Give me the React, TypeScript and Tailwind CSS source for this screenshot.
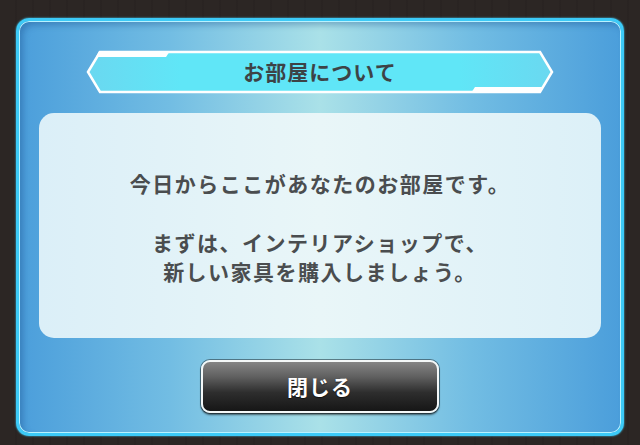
import React from "react";

const jp = { fontFamily: '"Noto Sans CJK JP", "Noto Sans", sans-serif' };

function Banner() {
  // Hexagonal title plate with striped ends
  const stripesL = [13, 16, 19, 22, 25, 28, 31, 34];
  const stripesR = [8, 11, 14, 17, 20, 23, 26];
  return (
    <div className="relative mx-auto flex h-[44px] w-[468px] items-center justify-center" style={jp}>
      <svg className="absolute inset-0" width="468" height="44" viewBox="0 0 468 44">
        <defs>
          <linearGradient id="plate" x1="0" x2="1" y1="0" y2="0">
            <stop offset="0" stopColor="#6ad8f0" />
            <stop offset="0.2" stopColor="#60e6f7" />
            <stop offset="0.8" stopColor="#60e6f7" />
            <stop offset="1" stopColor="#6ad8f0" />
          </linearGradient>
          <linearGradient id="fadeL" x1="0" x2="1" y1="0" y2="0">
            <stop offset="0" stopColor="#ffffff" stopOpacity="0.9" />
            <stop offset="1" stopColor="#ffffff" stopOpacity="0" />
          </linearGradient>
          <linearGradient id="fadeR" x1="1" x2="0" y1="0" y2="0">
            <stop offset="0" stopColor="#ffffff" stopOpacity="0.9" />
            <stop offset="1" stopColor="#ffffff" stopOpacity="0" />
          </linearGradient>
        </defs>
        <polygon
          points="2,22 14,2 454,2 466,22 454,42 14,42"
          fill="url(#plate)"
          stroke="#ffffff"
          strokeWidth="2.5"
          strokeLinejoin="miter"
        />
        {stripesL.map((y) => (
          <line key={"l" + y} x1="12" x2="180" y1={y} y2={y} stroke="url(#fadeL)" strokeWidth="1.2" />
        ))}
        {stripesR.map((y) => (
          <line key={"r" + y} x1="290" x2="458" y1={y} y2={y} stroke="url(#fadeR)" strokeWidth="1.2" />
        ))}
        <polygon points="13,1 84,1 80,7 10,7" fill="#ffffff" />
        <polygon points="389,37 457,37 454,43 385,43" fill="#ffffff" />
      </svg>
      <span className="relative text-[21px] font-bold tracking-[1px] text-[#3d4346]">お部屋について</span>
    </div>
  );
}

export default function App() {
  return (
    <div className="h-[445px] w-[640px] overflow-hidden bg-[repeating-linear-gradient(90deg,#2c2624_0px,#2c2624_15px,#272120_16px,#2c2624_17px)] pl-[16px] pt-[18px]">
      <div className="flex h-[418px] w-[608px] flex-col rounded-[13px] border-[3px] border-[#3ccaf7] bg-[linear-gradient(90deg,#4b9edb_0%,#72bde3_25%,#aae1e8_50%,#72bde3_75%,#4b9edb_100%)] shadow-[inset_0_0_0_1px_#b8f2ff,inset_4px_4px_6px_rgba(20,70,130,0.35),0_0_2px_#49d4ff]">
        <div className="pt-[29px]">
          <Banner />
        </div>
        <div
          className="mx-auto mt-[19px] flex h-[225px] w-[562px] flex-col items-center justify-center rounded-[15px] bg-[linear-gradient(90deg,#dbeff8_0%,#e9f6f8_50%,#dcf0f8_100%)] pt-[4px] text-center text-[21px] font-bold leading-[29.5px] tracking-[1.5px] text-[#4a4d4f]"
          style={jp}
        >
          <p>今日からここがあなたのお部屋です。</p>
          <p>&nbsp;</p>
          <p>まずは、インテリアショップで、</p>
          <p>新しい家具を購入しましょう。</p>
        </div>
        <div className="mt-[22px] flex justify-center">
          <button
            className="flex h-[53px] w-[238px] items-center justify-center rounded-[9px] border-[2px] border-[#f4f8f8] bg-[linear-gradient(180deg,#858585_0%,#606060_30%,#2e2e2e_62%,#161616_100%)] text-[21px] font-bold tracking-[1px] text-white shadow-[0_2px_2px_rgba(0,0,0,0.55),0_0_0_1px_rgba(40,60,70,0.6)]"
            style={jp}
          >
            <span className="[text-shadow:0_1px_1px_rgba(0,0,0,0.6)]">閉じる</span>
          </button>
        </div>
      </div>
    </div>
  );
}
